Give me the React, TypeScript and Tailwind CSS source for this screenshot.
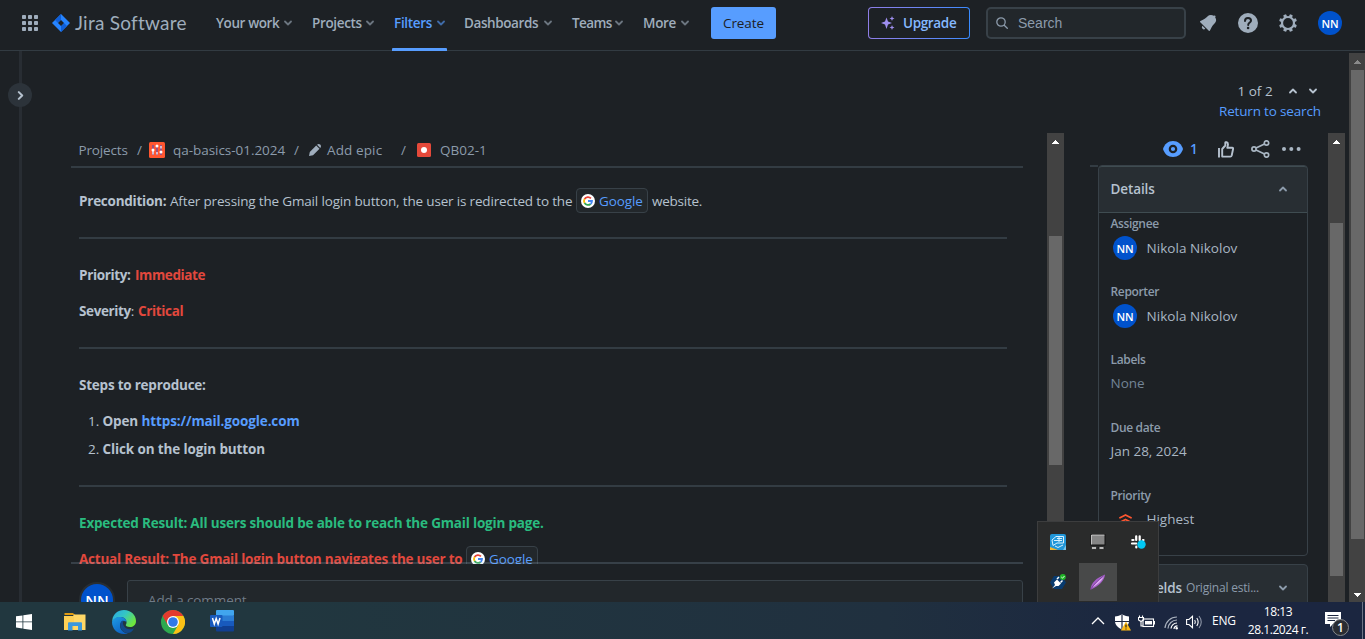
import React from "react";

type P = { className?: string };

const Chevron = ({ className = "", dir = "down", size = 8 }: P & { dir?: "down" | "up" | "right"; size?: number }) => (
  <svg className={"shrink-0 " + className} width={size} height={size} viewBox="0 0 8 8" fill="none" stroke="currentColor" strokeWidth="1.8" strokeLinecap="round" strokeLinejoin="round">
    <path d={dir === "down" ? "M1 2.5L4 5.5L7 2.5" : dir === "up" ? "M1 5.5L4 2.5L7 5.5" : "M2.5 1L5.5 4L2.5 7"} />
  </svg>
);

const Avatar = ({ className = "" }: P) => (
  <div className={"flex h-6 w-6 shrink-0 items-center justify-center rounded-full bg-[#0052cc] text-[11px] font-semibold leading-none tracking-[-0.2px] text-white " + className}>NN</div>
);

const GoogleG = () => (
  <svg className="shrink-0" width="14" height="14" viewBox="0 0 28 28">
    <circle cx="14" cy="14" r="14" fill="#fff" />
    <g fill="none" strokeWidth="3.6">
      <path d="M19.8 8.6A8 8 0 0 0 7.1 10" stroke="#ea4335" />
      <path d="M7.1 10A8 8 0 0 0 7.1 18" stroke="#fbbc05" />
      <path d="M7.1 18A8 8 0 0 0 19.2 20" stroke="#34a853" />
      <path d="M19.2 20A8 8 0 0 0 22 14H14" stroke="#4285f4" />
    </g>
  </svg>
);

const GoogleChip = () => (
  <span className="-mt-px inline-flex h-[25px] w-[72px] shrink-0 items-center gap-1 rounded-[4px] border border-[#384148] bg-[#22272b] pl-1 pt-px text-[#579dff]">
    <GoogleG />
    <span className="tracking-[-0.1px]">Google</span>
  </span>
);

const navItems = [
  { label: "Your work", cls: "w-[76px] text-[#9fadbc]", t: "tracking-[-0.4px]" },
  { label: "Projects", cls: "w-[62px] text-[#9fadbc]", t: "tracking-[-0.35px]" },
  { label: "Filters", cls: "w-[51px] text-[#579dff] mr-[-1px]", t: "tracking-[-0.3px]" },
  { label: "Dashboards", cls: "w-[88px] text-[#9fadbc]", t: "tracking-[-0.4px]" },
  { label: "Teams", cls: "w-[51px] text-[#9fadbc]", t: "tracking-[-0.6px]" },
  { label: "More", cls: "w-[46px] text-[#9fadbc]", t: "tracking-[-0.3px]" },
];

const Header = () => (
  <header className="flex h-[51px] shrink-0 items-start border-b border-[#323b42]">
    <div className="flex h-[46px] w-full items-center">
      <svg className="ml-[22px] shrink-0" width="16" height="16" viewBox="0 0 16 16" fill="#9fadbc">
        {[0, 6, 12].map((y) => [0, 6, 12].map((x) => <rect key={x + "-" + y} x={x} y={y} width="4" height="4" rx="0.8" />))}
      </svg>
      <svg className="ml-[14px] shrink-0" width="18" height="18" viewBox="0 0 18 18">
        <path d="M9 0L18 9L9 18L0 9Z" fill="#2684ff" />
        <path d="M9 0V6L6 9L3 6Z" fill="#0f5fd8" />
        <path d="M9 18V12L12 9L15 12Z" fill="#0f5fd8" />
        <path d="M9 6L12 9L9 12L6 9Z" fill="#1d2125" />
      </svg>
      <div className="ml-[5px] w-[141px] shrink-0 whitespace-nowrap font-['Lato',sans-serif] text-[19px] leading-6 tracking-[0.25px] text-[#9fadbc]">Jira Software</div>
      <nav className="flex h-full items-center gap-5 font-semibold">
        {navItems.map((n) => (
          <div key={n.label} className={"relative flex h-full items-center justify-between whitespace-nowrap " + n.cls}>
            <span className={n.t}>{n.label}</span>
            <Chevron className="opacity-60" />
            {n.label === "Filters" && <span className="absolute -left-[2px] top-[48px] h-[3px] w-[55px] rounded-t-[1px] bg-[#579dff]" />}
          </div>
        ))}
      </nav>
      <button className="ml-[22px] h-8 w-[65px] shrink-0 rounded-[3px] bg-[#579dff] font-medium tracking-[-0.1px] text-[#1d2125]">Create</button>
      <div className="ml-[92px] h-8 w-[102px] shrink-0 rounded-[4px] bg-gradient-to-r from-[#8f7ee7] to-[#388bff] p-px">
        <div className="flex h-full items-center rounded-[3px] bg-[#1d2125] pl-3">
          <svg width="14" height="14" viewBox="0 0 14 14" fill="#9f8fef">
            <path d="M5.5 1.5L7 5.5L11 7L7 8.500L5.500 13L4 8.500L0 7L4 5.500Z" />
            <path d="M11 0L11.700 1.800L13.500 2.500L11.700 3.200L11 5L10.300 3.200L8.500 2.500L10.300 1.800Z" />
            <path d="M11 9L11.700 10.800L13.500 11.500L11.700 12.200L11 14L10.300 12.200L8.500 11.500L10.300 10.800Z" />
          </svg>
          <span className="ml-[8px] font-semibold tracking-[-0.35px] text-[#85b8ff]">Upgrade</span>
        </div>
      </div>
      <div className="ml-4 flex h-8 w-[200px] shrink-0 items-center rounded-[5px] border-2 border-[#384148] bg-[#22272b] pl-2">
        <svg width="12" height="12" viewBox="0 0 12 12" fill="none" stroke="#8c9bab" strokeWidth="1.300" strokeLinecap="round">
          <circle cx="5" cy="5" r="4.200" />
          <path d="M8.200 8.200L11.300 11.300" />
        </svg>
        <span className="ml-[10px] font-['Liberation_Sans',sans-serif] text-[14px] text-[#8c9bab]">Search</span>
      </div>
      <svg className="ml-[10px] shrink-0" width="24" height="24" viewBox="0 0 24 24" fill="#9fadbc">
        <path d="M6.485 17.669a2 2 0 002.829 0l-2.829-2.83a2 2 0 000 2.83zm4.897-12.191l-.725.725c-.782.782-2.21 1.813-3.206 2.311l-3.017 1.509c-.495.248-.584.774-.187 1.171l8.556 8.556c.398.396.922.313 1.171-.188l1.51-3.016c.494-.988 1.526-2.42 2.311-3.206l.725-.726a5.048 5.048 0 00.64-6.356 1.01 1.01 0 10-1.354-1.494c-.023.025-.046.049-.066.075a5.043 5.043 0 00-2.788-.84 5.036 5.036 0 00-3.57 1.478z" />
      </svg>
      <svg className="ml-[18px] shrink-0" width="20" height="20" viewBox="0 0 20 20">
        <circle cx="10" cy="10" r="10" fill="#9fadbc" />
        <path d="M7 8C7 6.200 8.300 5 10 5S13 6.100 13 7.700C13 9.500 10.200 9.700 10.200 12" fill="none" stroke="#1d2125" strokeWidth="2" strokeLinecap="round" />
        <circle cx="10.100" cy="15" r="1.300" fill="#1d2125" />
      </svg>
      <svg className="ml-[21px] shrink-0" width="18" height="18" viewBox="0 0 18 18">
        <circle cx="9" cy="9" r="6" fill="none" stroke="#9fadbc" strokeWidth="2.200" />
        {[22.5, 67.5, 112.5, 157.5, 202.5, 247.5, 292.5, 337.5].map((a) => (
          <rect key={a} x="7.400" y="0" width="3.200" height="3" rx="0.800" fill="#9fadbc" transform={`rotate(${a} 9 9)`} />
        ))}
      </svg>
      <Avatar className="ml-[21px]" />
    </div>
  </header>
);

const ScrollBar = ({ track, thumb, arrow = "text-white", bottom = false }: { track: string; thumb: string; arrow?: string; bottom?: boolean }) => (
  <div className={"relative shrink-0 bg-[#424242] " + track}>
    <svg className={"absolute left-[5px] top-[7px] " + arrow} width="7" height="4" viewBox="0 0 7 4" fill="currentColor" shapeRendering="crispEdges"><path d="M3 0H4V1H5V2H6V3H7V4H0V3H1V2H2V1H3Z" /></svg>
    <div className={"absolute left-[2px] w-[13px] bg-[#686868] " + thumb} />
    {bottom && <svg className="absolute bottom-[5px] left-[5px] text-white" width="7" height="4" viewBox="0 0 7 4" fill="currentColor" shapeRendering="crispEdges"><path d="M0 0H7V1H6V2H5V3H4V4H3V3H2V2H1V1H0Z" /></svg>}
  </div>
);

const Rule = () => <div className="my-6 h-[2px] w-[928px] bg-[#333c43]" />;

const Breadcrumbs = () => (
  <div className="flex h-[33px] shrink-0 items-center whitespace-nowrap pl-[7.500px] text-[#8c9bab]">
    <span className="w-[58.500px] tracking-[-0.15px]">Projects</span>
    <span className="w-[12px]">/</span>
    <svg width="16" height="16" viewBox="0 0 16 16">
      <rect width="16" height="16" rx="1.500" fill="#ff5630" />
      <path d="M4 3V13M8 3V13M12 3V13" stroke="#5e4db2" strokeWidth="1.200" />
      <circle cx="4" cy="8" r="1.500" fill="#fff" /><circle cx="8" cy="4" r="1.500" fill="#fff" /><circle cx="12" cy="10" r="1.500" fill="#fff" />
      <path d="M4 9V12.500M8 10V12.500M12 4V6.500" stroke="#fff" strokeWidth="1.200" />
    </svg>
    <span className="ml-2 w-[121px] tracking-[-0.04px]">qa-basics-01.2024</span>
    <span className="w-[14px]">/</span>
    <svg width="14" height="14" viewBox="0 0 14 14" fill="#9fadbc"><path d="M8.200 2.500L11.500 5.800L5 12.200L1 13L1.800 9ZM9 1.700C10.100 0.600 11.300 0.700 12.200 1.600S13.400 3.900 12.300 5Z" /></svg>
    <span className="ml-[5px] w-[74px] tracking-[0.12px]">Add epic</span>
    <span className="w-[16px]">/</span>
    <svg width="14" height="14" viewBox="0 0 14 14"><rect width="14" height="14" rx="1.500" fill="#e5493a" /><circle cx="7" cy="7" r="3" fill="#fff" /></svg>
    <span className="ml-[9px]">QB02-1</span>
  </div>
);

const IssueBody = () => (
  <section className="relative ml-[49px] flex h-full w-[952px] shrink-0 flex-col">
    <Breadcrumbs />
    <div className="h-[2px] shrink-0 bg-[#333c43]" />
    <div className="h-[396px] shrink-0 overflow-hidden whitespace-nowrap pl-2 pt-[21px] leading-6 text-[#b6c2cf]">
      <p className="flex h-6 items-center">
        <b className="w-[91px] tracking-[-0.24px]">Precondition:</b>
        <span className="w-[406px] tracking-[-0.165px]">After pressing the Gmail login button, the user is redirected to the</span>
        <GoogleChip />
        <span className="ml-1 tracking-[-0.25px]">website.</span>
      </p>
      <Rule />
      <p className="flex"><b className="w-[56px] tracking-[-0.35px]">Priority:</b><b className="tracking-[-0.38px] text-[#e2483d]">Immediate</b></p>
      <p className="mt-3 flex"><span className="w-[59px]"><b className="tracking-[-0.38px]">Severity</b>:</span><b className="tracking-[-0.35px] text-[#e2483d]">Critical</b></p>
      <Rule />
      <p className="font-bold tracking-[-0.23px]">Steps to reproduce:</p>
      <ol className="mt-3 pl-[9px]">
        <li className="flex"><span className="w-[14.500px]">1.</span><b className="w-[39px] tracking-[-0.2px]">Open</b><b className="tracking-[-0.12px] text-[#579dff]">https://mail.google.com</b></li>
        <li className="mt-1 flex"><span className="w-[14.500px]">2.</span><b className="tracking-[-0.12px]">Click on the login button</b></li>
      </ol>
      <Rule />
      <p className="font-bold tracking-[-0.185px] text-[#2abb7f]">Expected Result: All users should be able to reach the Gmail login page.</p>
      <p className="mt-3 flex h-6 items-center"><b className="w-[387px] tracking-[-0.22px] text-[#e2483d]">Actual Result: The Gmail login button navigates the user to</b><GoogleChip /></p>
    </div>
    <div className="absolute left-0 top-[429px] h-[2px] w-full bg-[#a1bdd9]/20" />
    <div className="flex h-[38px] shrink-0 overflow-hidden pl-2 pt-4">
      <div className="mt-[2px] flex h-9 w-9 items-center justify-center rounded-full bg-[#282e33]">
        <div className="flex h-8 w-8 items-center justify-center rounded-full bg-[#0052cc] text-[15px] font-semibold leading-none text-white">NN</div>
      </div>
      <div className="ml-3 h-[50px] flex-1 rounded-[3px] border border-[#384148] bg-[#22272b] pl-5 pt-[9px] leading-5 tracking-[-0.1px] text-[#6f7b87]">Add a comment...</div>
    </div>
  </section>
);

const Field = ({ label, children, shift = "pb-0" }: { label: string; children: React.ReactNode; shift?: string }) => (
  <div className="h-[68px]">
    <div className="h-4 text-[12px] font-semibold leading-4 tracking-[-0.35px] text-[#8c9bab]">{label}</div>
    <div className={"flex h-8 items-center text-[#a9b6c3] " + shift}>{children}</div>
  </div>
);

const Person = () => <><Avatar className="ml-[2.500px]" /><span className="ml-[9.500px] tracking-[0.04px]">Nikola Nikolov</span></>;

const Sidebar = () => (
  <aside className="ml-[26px] h-full w-[218px] shrink-0 overflow-hidden">
    <div className="flex h-8 items-center pl-[73px] text-[#9fadbc]">
      <svg width="20" height="16" viewBox="0 0 20 16"><path d="M10 0C5 0 1.500 3 0 8C1.500 13 5 16 10 16S18.500 13 20 8C18.500 3 15 0 10 0Z" fill="#579dff" /><circle cx="10" cy="8" r="3.200" fill="none" stroke="#1d2125" strokeWidth="2.200" /></svg>
      <span className="ml-[7px] w-[11px] font-semibold text-[#579dff]">1</span>
      <svg className="ml-[17px]" width="16" height="17" viewBox="0 0 16 17" fill="none" stroke="#b6c2cf" strokeWidth="1.900" strokeLinejoin="round"><path d="M1 7V16.500" /><path d="M4.200 15.500V8L7.300 4.500V1.800C7.300 0.800 10 0.700 10 3.500L9.300 6.800H14.200C15 6.800 15.300 7.300 15.100 8L13.700 14.500C13.500 15.200 13 15.600 12.300 15.600Z" /></svg>
      <svg className="ml-[17px]" width="19" height="18" viewBox="0 0 19 18" fill="none" stroke="#a9b6c3" strokeWidth="1.700"><circle cx="3" cy="9" r="2.100" /><circle cx="15.500" cy="3" r="2.200" /><circle cx="15.500" cy="15" r="2.200" /><path d="M5 8L13.500 4M5 10L13.500 14" /></svg>
      <svg className="ml-[12px]" width="19" height="4" viewBox="0 0 19 4" fill="#a9b6c3"><circle cx="2" cy="2" r="2" /><circle cx="9.300" cy="2" r="2" /><circle cx="16.600" cy="2" r="2" /></svg>
    </div>
    <div className="flex">
      <div className="h-[2px] w-2 bg-[#333c43]" />
      <div className="h-[391px] w-[210px] rounded-[4px] border border-[#384148]">
        <div className="flex h-[47px] items-center justify-between rounded-t-[3px] border-b border-t border-[#3f4c51] bg-[#282e33] pl-[11.500px] pr-5 text-[#b6c2cf]">
          <span className="-mt-[2px] font-semibold tracking-[-0.1px]">Details</span>
          <Chevron dir="up" className="-mt-px text-[#8c9bab]" />
        </div>
        <div className="whitespace-nowrap pl-[11.500px] pt-[3px]">
          <Field label="Assignee"><Person /></Field>
          <Field label="Reporter"><Person /></Field>
          <Field label="Labels" shift="pb-[2px]"><span className="text-[#738496]">None</span></Field>
          <Field label="Due date" shift="pb-[2px]"><span>Jan 28, 2024</span></Field>
          <Field label="Priority" shift="pb-[2px]">
            <svg className="ml-2" width="13" height="11" viewBox="0 0 13 11" fill="none" stroke="#ff5630" strokeWidth="1.800" strokeLinecap="round" strokeLinejoin="round"><path d="M1 3.700L6.500 1L12 3.700M1 8.200L6.500 5.500L12 8.200" /></svg>
            <span className="ml-[15px]">Highest</span>
          </Field>
        </div>
      </div>
    </div>
    <div className="ml-2 mt-2 flex h-12 items-center rounded-[4px] border border-[#384148] bg-[#282e33] pl-[12px] pr-5">
      <span className="w-[75px] whitespace-nowrap font-semibold tracking-[-0.2px] text-[#b6c2cf]">More fields</span>
      <span className="whitespace-nowrap text-[12px] tracking-[-0.2px] text-[#8c9bab]">Original esti...</span>
      <Chevron className="ml-auto text-[#8c9bab]" />
    </div>
  </aside>
);

const TrayPopup = () => (
  <div className="absolute left-[1037px] top-[521px] grid h-[81px] w-[122px] grid-cols-[38px_38px_38px] grid-rows-[38px_38px] gap-x-[2px] gap-y-[2px] border border-b-0 border-[#3c3d3e] bg-[#2a2b2b] pl-px pt-[1px] *:flex *:items-center *:justify-center">
    <div>
      <svg width="16" height="16" viewBox="0 0 16 16"><rect width="16" height="16" rx="2" fill="#2196d8" /><path d="M0 13V16H8Z" fill="#f2b632" /><path d="M13 16H16V11Z" fill="#7cc4e8" /><path d="M2 6L6 2.500H13.500V9H7L3 11.500ZM4 6.500H12M7 4.500H12M9 3V8M5 12L8 13.500L13 11" fill="none" stroke="#d8f1ff" strokeWidth="1" /></svg>
    </div>
    <div>
      <svg className="mt-[-1px]" width="16" height="16" viewBox="0 0 16 16"><rect x="1" y="0.500" width="14" height="10.500" fill="#858585" stroke="#111" /><path d="M1.500 10.500V1H14.500" fill="none" stroke="#ddd" strokeWidth="0.800" /><rect x="1.500" y="12.500" width="5" height="3" rx="1" fill="#bbb" stroke="#111" strokeWidth="0.700" /><rect x="9" y="12.500" width="5" height="3" rx="1" fill="#bbb" stroke="#111" strokeWidth="0.700" /></svg>
    </div>
    <div>
      <svg width="16" height="16" viewBox="0 0 16 16"><g stroke="#fff" strokeWidth="2.200" strokeLinecap="round"><path d="M6.200 2.300V6M2.300 6H3.500M9.700 2.300V6.300M13.500 6H13M2 9.500H6.200M6.300 12.500V13.500" /></g><circle cx="11.500" cy="10.500" r="4.200" fill="#00c8f5" /></svg>
    </div>
    <div>
      <svg width="16" height="16" viewBox="0 0 16 16"><path d="M4 2H12L16 8.500L12 15H4L0 8.500Z" fill="#083a6e" /><path d="M2 14.500L5 11L4 8.500L7 5.500L11 9.500L8.500 12H6Z" fill="#fff" /><path d="M7 5L9 3M10.500 8.500L12.500 6.500" stroke="#fff" strokeWidth="1.500" /><circle cx="12.800" cy="3" r="3" fill="#1fb426" /><path d="M11.300 3L12.500 4.200L14.500 2" fill="none" stroke="#fff" strokeWidth="0.900" /></svg>
    </div>
    <div className="bg-[#484949]">
      <svg width="16" height="16" viewBox="0 0 16 16"><path d="M0.500 15.500C1 9 6 4 15 0.500C14.500 7 9 11.500 1 15.500Z" fill="#a560c8" /><path d="M2.500 13.500C6 8.500 9 6 14 2C11.500 7.500 8 10 2.500 13.500Z" fill="#dca9f0" /><path d="M0.500 15.500C4 10 8 6.500 13.500 2" fill="none" stroke="#713894" strokeWidth="0.800" /></svg>
    </div>
  </div>
);

const Taskbar = () => (
  <footer className="flex h-[37px] shrink-0 items-center bg-gradient-to-r from-[#21373f] from-20% via-[#20303f] via-65% to-[#1b2640] to-85% text-white">
    <svg className="ml-4 mt-[2px]" width="16" height="16" viewBox="0 0 16 16" fill="#fff"><path d="M0 2.300L6.500 1.400V7.500H0ZM7.300 1.300L16 0V7.500H7.300ZM0 8.300H6.500V14.500L0 13.600ZM7.300 8.300H16V16L7.300 14.700Z" /></svg>
    <svg className="ml-8 mt-[2px]" width="22" height="18" viewBox="0 0 22 18"><path d="M0.500 0H9L11 2H0.500Z" fill="#e09b12" /><path d="M0 3H9L10 1.500H21.500V17H0Z" fill="#ffd766" /><path d="M0 3H9L10 4V17H0Z" fill="#fdcb4a" opacity="0.600" /><path d="M4 17.500V10.500C4 9.800 4.500 9.300 5.200 9.300H16.800C17.500 9.300 18 9.800 18 10.500V17.500H14V13H8.500V17.500Z" fill="#3a97dd" /></svg>
    <svg className="ml-[26px] mt-[3px]" width="24" height="24" viewBox="0 0 24 24">
      <defs>
        <linearGradient id="edgeTop" x1="0" y1="0" x2="1" y2="0.600"><stop offset="0" stopColor="#2aa6e6" /><stop offset="0.500" stopColor="#34c6c4" /><stop offset="1" stopColor="#6fe63c" /></linearGradient>
        <linearGradient id="edgeSide" x1="0" y1="0" x2="0.600" y2="1"><stop offset="0" stopColor="#1f9de4" /><stop offset="1" stopColor="#0d62c4" /></linearGradient>
      </defs>
      <path d="M0.300 10C1 4 6 0 12 0C19 0 24 5 24 11C24 15 21 17 18 17C15 17 13.500 15.800 13.800 14.800C15.500 13 14.500 7.500 9.500 7C5 6.800 1.500 9 0.300 12Z" fill="url(#edgeTop)" />
      <path d="M0 12C1 8.500 5 6.500 9 7C12 7.200 14.500 9.300 14.500 12C12 9.500 8 11.500 8 15.500C8 20 12 23.500 16 23C14.800 23.700 13.500 24 12 24C5 24 0 18.500 0 12Z" fill="url(#edgeSide)" />
      <path d="M8.300 14C8.500 11.500 10 10.500 11.500 10.500C9.500 14.500 13 19.500 18.500 19.200C20 19.200 21.200 18.700 22 18.200C20.500 21.500 18 23 15.500 23C11 23 7.800 18.500 8.300 14Z" fill="#124a8c" />
    </svg>
    <svg className="ml-[25px] mt-[3px]" width="24" height="24" viewBox="0 0 24 24">
      <circle cx="12" cy="12" r="12" fill="#2da94f" />
      <path d="M22.400 6H12L6.800 15L1.600 6A12 12 0 0 1 22.400 6Z" fill="#e33b2e" />
      <path d="M17.200 15L12 24A12 12 0 0 0 22.400 6H12Z" fill="#fbc116" />
      <circle cx="12" cy="12" r="6" fill="#fff" /><circle cx="12" cy="12" r="4.800" fill="#2f79ea" />
    </svg>
    <svg className="ml-[25px] mt-[1px]" width="24" height="22" viewBox="0 0 24 22"><rect x="6" width="18" height="6" rx="1" fill="#41a5ee" /><rect x="6" y="5.500" width="18" height="5.500" fill="#2b7cd3" /><rect x="6" y="11" width="18" height="5" fill="#185abd" /><path d="M6 16H24V20.500Q24 21.500 23 21.500H7Q6 21.500 6 20.500Z" fill="#103f91" /><rect y="5" width="12.500" height="12" rx="1" fill="#185abd" /><path d="M2.500 8L4.300 14L6.200 8.500L8.100 14L10 8" fill="none" stroke="#fff" strokeWidth="1.500" /></svg>
    <div className="ml-auto flex h-full items-center">
      <svg width="14" height="8" viewBox="0 0 14 8" fill="none" stroke="#fff" strokeWidth="1.300"><path d="M1 7L7 1L13 7" /></svg>
      <svg className="ml-[9px] mt-[3px]" width="18" height="17" viewBox="0 0 18 17"><path d="M1 2.500L4 2L8 0.500L12 2L15 2.500V7C15 11 12 13.500 8 15.500C4 13.500 1 11 1 7Z" fill="#fff" /><path d="M8 1V15M1 7.500H15" stroke="#1d2740" strokeWidth="1.200" /><path d="M12 7.500L17 16.500H7Z" fill="#fdb913" /><path d="M12 10.500V13.500M12 14.500V15.500" stroke="#222" strokeWidth="1.200" /></svg>
      <svg className="ml-[6px] mt-[2px]" width="17" height="14" viewBox="0 0 17 14" fill="none" stroke="#fff" strokeWidth="1.100"><rect x="5" y="4" width="10.500" height="7.500" /><rect x="7" y="6" width="7" height="3.500" fill="#fff" stroke="none" /><path d="M16.500 6V9.500M1.500 0.500V2.500M4.500 0.500V2.500M0.500 2.500H5.500V5L3 6.500L0.500 5ZM3 6V11H5" /></svg>
      <svg className="ml-[9px] mt-[3px]" width="15" height="15" viewBox="0 0 15 15" fill="none" stroke="#fff" strokeWidth="1.200"><g stroke="#aab2bf"><path d="M1 13A12 12 0 0 1 13 2" /><path d="M4 13.500A9 9 0 0 1 13 5" /></g><path d="M7 13.500A6 6 0 0 1 13 8" /><path d="M10 14A3.500 3.500 0 0 1 13.500 10.800" /><circle cx="12.700" cy="13.200" r="1.200" fill="#fff" stroke="none" /></svg>
      <svg className="ml-[7px] mt-[2px]" width="17" height="14" viewBox="0 0 17 14" fill="none" stroke="#fff" strokeWidth="1.100"><path d="M0.600 4.500H3L6.500 1.300V12.700L3 9.500H0.600Z" /><path d="M8.700 5Q10 7 8.700 9M10.800 3Q13.500 7 10.800 11" /><path d="M13 1Q17.500 7 13 13" stroke="#8c94a5" /></svg>
      <span className="ml-[9px] w-[23px] text-[12px] tracking-[-0.2px]">ENG</span>
      <div className="ml-[13px] flex w-[60px] flex-col items-center whitespace-nowrap pt-[1px] text-[12px] leading-[18px] tracking-[-0.45px]"><span>18:13</span><span>28.1.2024 г.</span></div>
      <div className="relative -mt-px ml-[17px] mr-[21px] h-4 w-4">
        <svg width="16" height="16" viewBox="0 0 16 16"><path d="M0 0H16V12H8L5 15V12H0Z" fill="#fff" /><path d="M2.500 3.500H13.500M2.500 6H13.500M2.500 8.500H10" stroke="#1d2740" strokeWidth="1" /></svg>
        <span className="absolute left-[7px] top-[7px] flex h-[17px] w-[17px] items-center justify-center rounded-full border border-[#85888c] bg-[#2a2d33] text-[12px] font-semibold leading-none">1</span>
      </div>
      <div className="mr-[2px] h-full w-px bg-[#6c7585]" />
    </div>
  </footer>
);

export default function App() {
  return (
    <div className="relative flex h-[639px] w-[1365px] flex-col overflow-hidden bg-[#1d2125] font-['Open_Sans',sans-serif] text-[13.500px] leading-5">
      <Header />
      <main className="flex h-[551px] shrink-0">
        <div className="relative w-[22px] shrink-0">
          <div className="ml-[19px] h-full w-[3px] bg-[#282d33]" />
          <div className="absolute left-2 top-8 flex h-6 w-6 items-center justify-center rounded-full bg-[#2c333a] text-[#b6c2cf]"><Chevron dir="right" size={9} /></div>
        </div>
        <div className="flex w-[1327px] shrink-0 flex-col">
          <div className="flex h-[82px] shrink-0 flex-col items-end pr-[29px] pt-[30px] text-[#b6c2cf]">
            <div className="flex h-5 items-center whitespace-nowrap pr-[3px]">
              <span className="w-[35.500px]">1 of 2</span>
              <Chevron dir="up" className="ml-4" /><Chevron className="ml-3" />
            </div>
            <div className="h-5 w-[101px] whitespace-nowrap tracking-[-0.17px] text-[#579dff]">Return to search</div>
          </div>
          <div className="flex h-[469px]">
            <IssueBody />
            <ScrollBar track="ml-6 h-full w-[17px]" thumb="top-[103px] h-[229px]" />
            <Sidebar />
            <ScrollBar track="ml-5 h-full w-[17px]" thumb="top-[90px] h-[353px]" />
          </div>
        </div>
        <ScrollBar track="mt-[2px] h-[549px] w-[16px]" thumb="top-[17px] h-[469px]" arrow="text-[#8a8a8a]" bottom />
      </main>
      <TrayPopup />
      <Taskbar />
    </div>
  );
}
